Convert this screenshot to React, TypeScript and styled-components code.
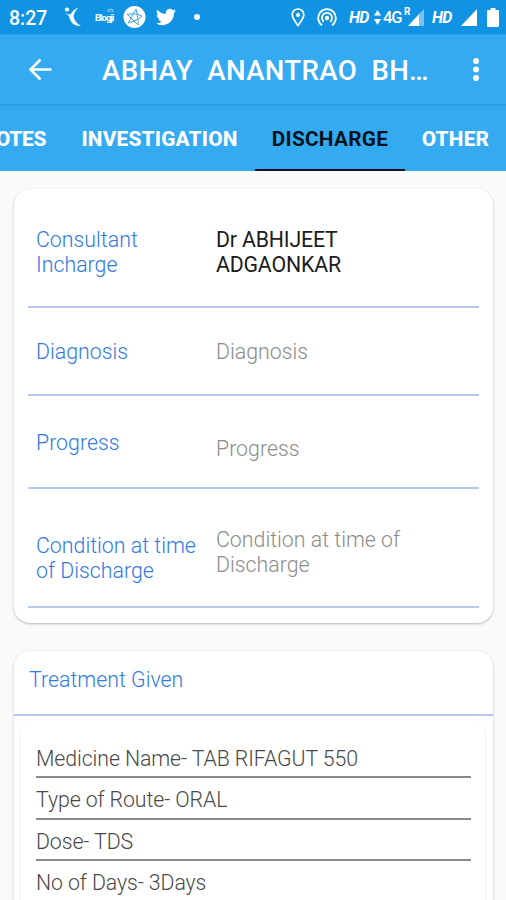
import React from "react";
import styled, { createGlobalStyle } from "styled-components";

const GlobalStyle = createGlobalStyle`
  * { box-sizing: border-box; }
  html, body { margin: 0; padding: 0; background: #fafafa; }
  body { font-family: Roboto, "Liberation Sans", sans-serif; overflow: hidden; }
`;

const Screen = styled.div`
  width: 506px;
  height: 900px;
  overflow: hidden;
  display: flex;
  flex-direction: column;
  background: #fafafa;
`;

const StatusBar = styled.header`
  flex: none;
  height: 34px;
  padding: 0 7px 0 9px;
  display: flex;
  align-items: center;
  justify-content: space-between;
  background: #1193e3;
  color: #fff;
`;

const StatusGroup = styled.div`
  display: flex;
  align-items: center;
  height: 34px;
`;

const Clock = styled.span`
  width: 55px;
  font-size: 19.5px;
  font-weight: 500;
  line-height: 34px;
  padding-top: 3px;
`;

const StatusIcon = styled.svg<{ $gap?: number }>`
  flex: none;
  display: block;
  margin-left: ${(p) => p.$gap ?? 0}px;
`;

const SimLabel = styled.span<{ $gap: number; $italic?: boolean; $width: number }>`
  flex: none;
  width: ${(p) => p.$width}px;
  margin-left: ${(p) => p.$gap}px;
  font-size: ${(p) => (p.$italic ? 16 : 16.5)}px;
  font-weight: ${(p) => (p.$italic ? 700 : 500)};
  font-style: ${(p) => (p.$italic ? "italic" : "normal")};
  letter-spacing: ${(p) => (p.$italic ? -0.6 : -1.2)}px;
  white-space: nowrap;
  line-height: 34px;
  padding-top: 1px;
`;

const MiniText = styled.span<{ $size: number; $gap: number; $width: number }>`
  flex: none;
  width: ${(p) => p.$width}px;
  margin-left: ${(p) => p.$gap}px;
  font-size: ${(p) => p.$size}px;
  font-weight: 700;
  white-space: nowrap;
  letter-spacing: -1px;
`;

const RoamingText = styled(MiniText)`
  align-self: flex-start;
  padding-top: 6px;
`;

const AppLogo = styled.div`
  width: 19px;
  margin-left: 13px;
  display: flex;
  flex-direction: column;
  align-items: flex-end;
  padding-bottom: 4px;
`;

const LogoText = styled(MiniText)`
  line-height: 9px;
`;

const AppBar = styled.div`
  flex: none;
  height: 72px;
  padding: 1px 20px 0 28px;
  display: flex;
  align-items: center;
  background: #34aaf0;
  border-top: 1px solid #2aa1ea;
  border-bottom: 2px solid #2c9ce3;
  color: #fff;
`;

const Title = styled.h1`
  flex: 1;
  margin: 2px 0 0 50px;
  font-size: 27.6px;
  line-height: 32px;
  font-weight: 500;
  white-space: pre;
  letter-spacing: 0.35px;
`;

const Tabs = styled.nav`
  flex: none;
  height: 65px;
  display: flex;
  overflow: hidden;
  background: #34aaf0;
`;

const Tab = styled.div<{ $width: number; $active?: boolean }>`
  flex: none;
  width: ${(p) => p.$width}px;
  height: 65px;
  display: flex;
  justify-content: center;
  padding-top: 21px;
  font-size: 20.8px;
  line-height: 24px;
  font-weight: ${(p) => (p.$active ? 700 : 800)};
  letter-spacing: ${(p) => (p.$active ? 0.25 : 0.2)}px;
  color: ${(p) => (p.$active ? "#07131c" : "#fff")};
  border-bottom: ${(p) => (p.$active ? "2px solid #07131c" : "0")};
`;

const FirstTab = styled(Tab)`
  justify-content: flex-end;
  padding-right: 18px;
  letter-spacing: -0.3px;
`;

const Content = styled.main`
  display: flex;
  flex-direction: column;
  gap: 28px;
  padding: 18px 13px 0 14px;
`;

const Card = styled.section`
  flex: none;
  background: #fff;
  border-radius: 16px;
  box-shadow: 0 1px 3px rgba(0, 0, 0, 0.22), 0 1px 1px rgba(0, 0, 0, 0.06);
`;

const DetailCard = styled(Card)`
  height: 434px;
  padding: 0 14px;
`;

const Row = styled.div<{ $height: number }>`
  height: ${(p) => p.$height}px;
  padding-left: 8px;
  display: grid;
  grid-template-columns: 180px 1fr;
  align-items: start;
  border-bottom: 2px solid #b9c7ee;
`;

const Text = styled.div<{ $top: number; $tone: "label" | "value" | "hint" }>`
  padding-top: ${(p) => p.$top}px;
  font-size: 21.3px;
  line-height: 25px;
  font-weight: ${(p) => (p.$tone === "value" ? 400 : 300)};
  white-space: pre-line;
  letter-spacing: ${(p) => (p.$tone === "value" ? -0.17 : 0.02)}px;
  color: ${(p) => ({ label: "#3079e0", value: "#1c1c1c", hint: "#8c8c8c" })[p.$tone]};
`;

const TreatmentCard = styled(Card)`
  height: 300px;
`;

const TreatmentHead = styled.div`
  height: 65px;
  padding-left: 15px;
  border-bottom: 2px solid #b9c7ee;
`;

const Medicine = styled.div`
  height: 300px;
  margin: 4px 8px 0 7px;
  padding: 16px 14px 0 15px;
  border-radius: 14px;
  box-shadow: 0 1px 3px rgba(0, 0, 0, 0.13);
`;

const MedicineLine = styled.div<{ $height: number; $top: number }>`
  height: ${(p) => p.$height}px;
  padding-top: ${(p) => p.$top}px;
  font-size: 21.3px;
  line-height: 25px;
  font-weight: 300;
  letter-spacing: -0.09px;
  color: #484848;
  border-bottom: 2px solid #8a8a8a;

  &:last-child {
    border-bottom-color: #c4c4c4;
  }
`;

const details = [
  { label: "Consultant\nIncharge", value: "Dr ABHIJEET\nADGAONKAR", filled: true, height: 119, labelTop: 38, valueTop: 38 },
  { label: "Diagnosis", value: "Diagnosis", height: 88, labelTop: 31, valueTop: 31 },
  { label: "Progress", value: "Progress", height: 93, labelTop: 34, valueTop: 40 },
  { label: "Condition at time\nof Discharge", value: "Condition at time of\nDischarge", height: 119, labelTop: 44, valueTop: 38 },
];

const medicine = [
  { text: "Medicine Name- TAB RIFAGUT 550", height: 42, top: 10 },
  { text: "Type of Route- ORAL", height: 42, top: 9 },
  { text: "Dose- TDS", height: 41, top: 9 },
  { text: "No of Days- 3Days", height: 41, top: 9 },
];

export default function App() {
  return (
    <Screen>
      <GlobalStyle />
      <StatusBar>
        <StatusGroup>
          <Clock>8:27</Clock>
          <StatusIcon width="18" height="22" viewBox="0 0 18 22" fill="none">
            <circle cx="3" cy="3.500" r="2.100" fill="#fff" />
            <path d="M1 7 Q4 8.500 6.500 8.500 Q9 3.500 14.500 1.500 Q10 6 9.500 10.500 Q11 17 17 20 Q10 20 7 15.500 Q5 12 5 10 Z" fill="#fff" />
          </StatusIcon>
          <AppLogo>
            <StatusIcon width="7" height="5" viewBox="0 0 7 5" fill="none" stroke="#a9d8f6" strokeWidth="1">
              <path d="M1 4 Q0.500 1 3.500 1 Q6.500 1 6 4 M2.500 4 Q3.500 2 4.500 4" />
            </StatusIcon>
            <LogoText $size={9.5} $gap={0} $width={19}>Blogji</LogoText>
          </AppLogo>
          <StatusIcon $gap={9} width="23" height="24" viewBox="0 0 23 24">
            <circle cx="11.5" cy="12" r="11" fill="#fff" />
            <g fill="none" stroke="#3fa5e6" strokeWidth="1">
              <path d="M13 4 L14 9 L19 11 L15 14 L15 20 L11 16 L5 18 L8 13 L4 9 L10 9 Z" />
              <path d="M10 9 L14 9 L15 14 L11 16 L8 13 Z" />
            </g>
          </StatusIcon>
          <StatusIcon $gap={10} width="20" height="20" viewBox="0 0 24 24" fill="#fff">
            <path d="M23.95 4.57a10 10 0 0 1-2.82.77 4.96 4.96 0 0 0 2.16-2.72c-.95.55-2 .95-3.13 1.18a4.92 4.92 0 0 0-8.38 4.48C7.69 8.1 4.07 6.13 1.64 3.16a4.92 4.92 0 0 0 1.52 6.57 4.9 4.9 0 0 1-2.23-.61v.06a4.92 4.92 0 0 0 3.95 4.83 5 5 0 0 1-2.21.08 4.94 4.94 0 0 0 4.6 3.42A9.87 9.87 0 0 1 0 19.54a13.99 13.99 0 0 0 7.55 2.21c9.05 0 14-7.5 14-13.98 0-.21 0-.42-.02-.63a9.94 9.94 0 0 0 2.46-2.55z" />
          </StatusIcon>
          <StatusIcon $gap={18} width="6" height="6" viewBox="0 0 6 6">
            <circle cx="3" cy="3" r="3" fill="#fff" />
          </StatusIcon>
        </StatusGroup>
        <StatusGroup>
          <StatusIcon width="14" height="19" viewBox="0 0 14 19" fill="none" stroke="#fff">
            <path d="M7 17.5 C4 13.5 1.2 10 1.2 6.8 A5.8 5.8 0 0 1 12.8 6.8 C12.8 10 10 13.5 7 17.5 Z" strokeWidth="1.7" />
            <circle cx="7" cy="7" r="2.1" fill="#fff" stroke="none" />
          </StatusIcon>
          <StatusIcon $gap={12} width="20" height="19" viewBox="0 0 20 19" fill="none" stroke="#fff" strokeWidth="1.8">
            <path d="M5 17.2 A8.8 8.8 0 1 1 15 17.2" />
            <path d="M6.9 13.8 A5 5 0 1 1 13.1 13.8" />
            <circle cx="10" cy="10" r="2.2" fill="#fff" stroke="none" />
          </StatusIcon>
          <SimLabel $gap={12} $width={21} $italic>HD</SimLabel>
          <StatusIcon $gap={4} width="7" height="15" viewBox="0 0 7 15" fill="#fff">
            <path d="M3.5 0 L7 5.5 H0 Z M3.5 15 L7 9 H0 Z" />
          </StatusIcon>
          <SimLabel $gap={2} $width={19}>4G</SimLabel>
          <RoamingText $size={10} $gap={2} $width={7}>R</RoamingText>
          <StatusIcon $gap={-3} width="17" height="18" viewBox="0 0 17 18">
            <path d="M11 6 L16 1 V18 H11 Z" fill="#7bc2ee" />
            <path d="M0 18 L11 6 V18 Z" fill="#fff" />
          </StatusIcon>
          <SimLabel $gap={7} $width={21} $italic>HD</SimLabel>
          <StatusIcon $gap={7} width="18" height="18" viewBox="0 0 18 18">
            <path d="M1 18 L17 1 V18 Z" fill="#fff" />
          </StatusIcon>
          <StatusIcon $gap={9} width="12" height="20" viewBox="0 0 12 20" fill="#fff">
            <path d="M3.500 1 H8.500 V3 H11 Q12 3 12 4 V19 Q12 20 11 20 H1 Q0 20 0 19 V4 Q0 3 1 3 H3.500 Z" />
          </StatusIcon>
        </StatusGroup>
      </StatusBar>

      <AppBar>
        <StatusIcon width="24" height="24" viewBox="0 0 24 24" fill="none" stroke="#fff" strokeWidth="2.6">
          <path d="M23.500 11.500 H2 M12.500 1.500 L2.500 11.500 L12.500 21.500" />
        </StatusIcon>
        <Title>{"ABHAY  ANANTRAO  BH…"}</Title>
        <StatusIcon width="20" height="24" viewBox="0 0 20 24" fill="#fff">
          <circle cx="10" cy="3" r="3" />
          <circle cx="10" cy="11.500" r="3" />
          <circle cx="10" cy="20" r="3" />
        </StatusIcon>
      </AppBar>

      <Tabs>
        <FirstTab $width={64}>NOTES</FirstTab>
        <Tab $width={191}>INVESTIGATION</Tab>
        <Tab $width={150} $active>DISCHARGE</Tab>
        <Tab $width={101}>OTHER</Tab>
      </Tabs>

      <Content>
        <DetailCard>
          {details.map((d) => (
            <Row key={d.label} $height={d.height}>
              <Text $top={d.labelTop} $tone="label">{d.label}</Text>
              <Text $top={d.valueTop} $tone={d.filled ? "value" : "hint"}>{d.value}</Text>
            </Row>
          ))}
        </DetailCard>
        <TreatmentCard>
          <TreatmentHead>
            <Text $top={16} $tone="label">Treatment Given</Text>
          </TreatmentHead>
          <Medicine>
            {medicine.map((m) => (
              <MedicineLine key={m.text} $height={m.height} $top={m.top}>{m.text}</MedicineLine>
            ))}
          </Medicine>
        </TreatmentCard>
      </Content>
    </Screen>
  );
}
